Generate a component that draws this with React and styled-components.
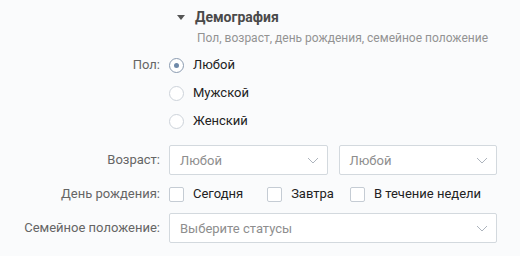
import React from 'react';
import styled, { createGlobalStyle } from 'styled-components';

const Global = createGlobalStyle`
  html, body { margin: 0; padding: 0; background: #fafbfc; }
  body { font-family: Roboto, "Noto Sans", Arial, sans-serif; font-size: 13px; color: #000; }
`;

const Page = styled.div`
  width: 520px;
  height: 256px;
  box-sizing: border-box;
  padding: 7px 23px 0 0;
  display: flex;
  flex-direction: column;
`;

const Row = styled.div`
  display: grid;
  grid-template-columns: 160px 1fr;
  column-gap: 9px;
  align-items: center;
  min-height: ${p => p.$h || 28}px;
  margin-top: ${p => p.$mt || 0}px;
`;

const Label = styled.div`
  text-align: right;
  color: #656565;
  line-height: 20px;
  white-space: nowrap;
`;

const Header = styled.div`
  display: flex;
  flex-direction: column;
  white-space: nowrap;
`;

const Title = styled.div`
  display: flex;
  align-items: center;
  gap: 10px;
  line-height: 20px;
  font-weight: 700;
  color: #4a4a4a;
  font-size: 14px;
`;

const Triangle = styled.span`
  width: 0;
  height: 0;
  border-left: 4px solid transparent;
  border-right: 4px solid transparent;
  border-top: 5px solid #555;
  margin-left: 8px;
`;

const Subtitle = styled.div`
  margin-top: 1px;
  line-height: 20px;
  color: #939393;
  font-size: 12px;
  padding-left: 28px;
`;

const Option = styled.label`
  display: flex;
  align-items: center;
  gap: 9px;
  line-height: 20px;
  color: #222;
  white-space: nowrap;
  margin-right: ${p => p.$mr || 0}px;
`;

const RadioCircle = styled.span`
  box-sizing: border-box;
  width: 15px;
  height: 15px;
  border-radius: 50%;
  border: 1px solid ${p => (p.$on ? '#8a9bb0' : '#cdd3da')};
  background: #fff;
  display: flex;
  align-items: center;
  justify-content: center;
  &::after {
    content: '';
    width: 5px;
    height: 5px;
    border-radius: 50%;
    background: ${p => (p.$on ? '#6f8aa9' : 'transparent')};
  }
`;

const Box = styled.span`
  box-sizing: border-box;
  width: 15px;
  height: 15px;
  border-radius: 2px;
  border: 1px solid #c5ccd4;
  background: #fff;
`;

const Checks = styled.div`
  display: flex;
  align-items: center;
`;

const Pair = styled.div`
  display: grid;
  grid-template-columns: 1fr 1fr;
  gap: 11px;
`;

const Select = styled.div`
  box-sizing: border-box;
  height: 30px;
  background: #fff;
  border: 1px solid #d3d9de;
  border-radius: 2px;
  display: flex;
  align-items: center;
  justify-content: space-between;
  padding: 0 8px 0 10px;
  color: #8e8e8e;
`;

const Chevron = () => (
  <svg width="12" height="7" viewBox="0 0 12 7" fill="none">
    <path d="M1 1l5 5 5-5" stroke="#adb4bd" strokeWidth="1" />
  </svg>
);

export default function App() {
  return (
    <>
      <Global />
      <Page>
        <Row $h={20}>
          <span />
          <Header>
            <Title>
              <Triangle />
              Демография
            </Title>
            <Subtitle>Пол, возраст, день рождения, семейное положение</Subtitle>
          </Header>
        </Row>
        <Row $mt={3}>
          <Label>Пол:</Label>
          <Option><RadioCircle $on />Любой</Option>
        </Row>
        <Row>
          <span />
          <Option><RadioCircle />Мужской</Option>
        </Row>
        <Row>
          <span />
          <Option><RadioCircle />Женский</Option>
        </Row>
        <Row $h={30} $mt={10}>
          <Label>Возраст:</Label>
          <Pair>
            <Select>Любой<Chevron /></Select>
            <Select>Любой<Chevron /></Select>
          </Pair>
        </Row>
        <Row $mt={5}>
          <Label>День рождения:</Label>
          <Checks>
            <Option $mr={24}><Box />Сегодня</Option>
            <Option $mr={16}><Box />Завтра</Option>
            <Option><Box />В течение недели</Option>
          </Checks>
        </Row>
        <Row $h={30} $mt={5}>
          <Label>Семейное положение:</Label>
          <Select>Выберите статусы<Chevron /></Select>
        </Row>
      </Page>
    </>
  );
}
